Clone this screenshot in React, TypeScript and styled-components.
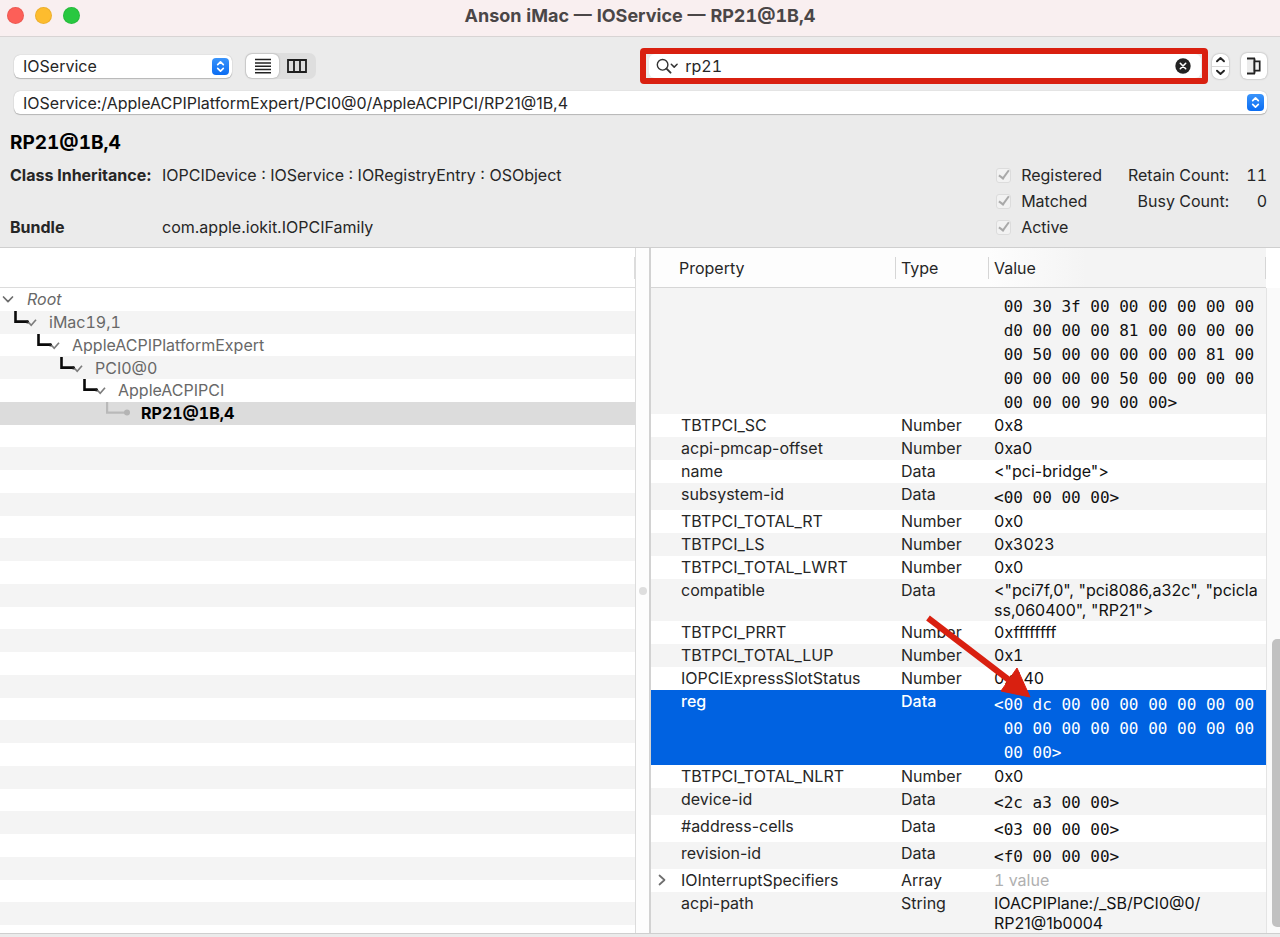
import React from "react";
import styled, { createGlobalStyle, css } from "styled-components";

const Global = createGlobalStyle`
  *, *::before, *::after { box-sizing: border-box; }
  body { margin: 0; background: #ebebeb; }
  button, input, select { font: inherit; color: inherit; }
`;

const tabular = css`
  font-variant-numeric: tabular-nums;
`;

const Window = styled.div`
  display: flex;
  flex-direction: column;
  height: 100vh;
  min-width: 960px;
  padding-bottom: 3px;
  background: #ebebeb;
  color: #262626;
  font: 400 16px/20px Inter, "Liberation Sans", sans-serif;
`;

const TitleBar = styled.header`
  display: grid;
  grid-template-columns: 1fr auto 1fr;
  align-items: center;
  height: 37px;
  padding: 0 7px 5px;
  background: #f9eff0;
  border-bottom: 1px solid #d8d4d4;
`;

const Title = styled.h1`
  ${tabular}
  margin: 0;
  font-size: 18px;
  font-weight: 700;
  line-height: 24px;
  color: #4a4647;
`;

const Lights = styled.div`
  display: flex;
  gap: 11px;
`;

const Light = styled.button<{ $color: string }>`
  width: 17px;
  height: 17px;
  padding: 0;
  border: 0;
  border-radius: 50%;
  background: ${(p) => p.$color};
  box-shadow: inset 0 0 0 1px rgba(0, 0, 0, 0.07);
`;

const Toolbar = styled.div`
  display: flex;
  align-items: center;
  padding: 11px 13px 7px 14px;
`;

const Spacer = styled.div`
  flex: 7;
`;

const PopUp = styled.div<{ $width?: string }>`
  display: grid;
  grid-template-columns: 1fr 20px;
  align-items: center;
  width: ${(p) => p.$width ?? "auto"};
  height: 23px;
  border-radius: 6px;
  background: #fff;
  box-shadow: 0 0 1px rgba(0, 0, 0, 0.3), 0 1px 1px rgba(0, 0, 0, 0.2);

  select {
    grid-area: 1 / 1 / 2 / 3;
    width: 100%;
    height: 23px;
    padding: 0 24px 0 9px;
    border: 0;
    background: transparent;
    appearance: none;
  }

  svg {
    grid-area: 1 / 2;
    pointer-events: none;
  }
`;

const PathRow = styled.div`
  padding: 0 13px 0 14px;
`;

const Segments = styled.div`
  display: flex;
  height: 26px;
  margin-left: 13px;
  padding: 1px;
  border-radius: 7px;
  background: #dedede;
`;

const Segment = styled.button<{ $on?: boolean }>`
  display: grid;
  place-items: center;
  width: ${(p) => (p.$on ? 33 : 36)}px;
  padding: 0;
  border: 0;
  border-radius: 6px;
  background: ${(p) => (p.$on ? "#fff" : "transparent")};
  box-shadow: ${(p) => (p.$on ? "0 0 2px rgba(0, 0, 0, 0.35)" : "none")};
`;

const Highlight = styled.div`
  flex: 12;
  height: 36px;
  border: 6px solid #d92010;
  border-radius: 4px;
  display: flex;
  background: #ebebeb;
`;

const SearchField = styled.label`
  display: flex;
  flex: 1;
  align-items: center;
  gap: 6px;
  margin: 0 1px 0 3px;
  padding: 0 10px 0 6px;
  border-radius: 6px;
  background: #fff;

  input {
    ${tabular}
    flex: 1;
    min-width: 0;
    height: 22px;
    padding: 0;
    border: 0;
    outline: 0;
    background: transparent;
  }
`;

const ClearButton = styled.button`
  display: grid;
  padding: 0;
  border: 0;
  background: none;
`;

const Stepper = styled.div`
  display: flex;
  flex-direction: column;
  width: 17px;
  margin-left: 4px;
  border-radius: 7px;
  background: #fff;
  box-shadow: 0 0 2px rgba(0, 0, 0, 0.35);

  button {
    display: grid;
    place-items: center;
    height: 12px;
    padding: 0;
    border: 0;
    background: none;
  }

  button + button {
    height: 13px;
    border-top: 1px solid #d9d9d9;
  }
`;

const InspectorButton = styled.button`
  display: grid;
  place-items: center;
  width: 26px;
  height: 26px;
  margin-left: 12px;
  padding: 0;
  border: 0;
  border-radius: 6px;
  background: #fff;
  box-shadow: 0 0 2px rgba(0, 0, 0, 0.35);
`;

const Info = styled.section`
  display: flex;
  align-items: flex-end;
  justify-content: space-between;
  padding: 17px 13px 7px 10px;
`;

const Name = styled.h2`
  ${tabular}
  margin: 0 0 7px;
  font-size: 19px;
  font-weight: 700;
  line-height: 24px;
  color: #000;
`;

const Facts = styled.dl`
  display: grid;
  grid-template-columns: 152px auto;
  grid-template-rows: repeat(3, 26px);
  align-items: center;
  margin: 0;

  dt { grid-column: 1; font-weight: 700; }
  dd { grid-column: 2; margin: 0; }
  dt:last-of-type, dd:last-of-type { grid-row: 3; }
`;

const Status = styled.div`
  display: grid;
  grid-template-columns: auto auto 38px;
  grid-template-rows: repeat(3, 26px);
  align-items: center;
  text-align: right;
  ${tabular}
`;

const Flag = styled.label`
  grid-column: 1;
  display: flex;
  align-items: center;
  gap: 10px;
  padding-right: 26px;

  input {
    display: grid;
    place-content: center;
    width: 15px;
    height: 15px;
    margin: 0;
    border: 1px solid #dcdcdc;
    border-radius: 3px;
    background: #f2f2f2;
    appearance: none;
  }

  input:checked::after {
    content: "";
    width: 6px;
    height: 11px;
    margin-bottom: 3px;
    border: solid #a9a9a9;
    border-width: 0 2px 2px 0;
    transform: rotate(36deg);
  }
`;

const Panes = styled.main`
  flex: 1;
  min-height: 0;
  display: grid;
  grid-template-columns: 635fr 16px 629fr;
  border-top: 1px solid #cfcfcf;
  border-bottom: 1px solid #cfcfcf;
  background: #fff;
`;

const TreePane = styled.section`
  display: flex;
  flex-direction: column;
  min-height: 0;
  min-width: 0;
`;

const TreeHead = styled.div`
  height: 40px;
  padding: 9px 0;
  border-bottom: 1px solid #dcdcdc;

  &::after {
    content: "";
    display: block;
    height: 22px;
    border-right: 1px solid #dcdcdc;
  }
`;

const Tree = styled.ul`
  flex: 1;
  min-height: 0;
  display: grid;
  grid-template-rows: repeat(28, minmax(0, 1fr)) 8px;
  margin: 0;
  padding: 0;
  list-style: none;
  ${tabular}
`;

const TreeRow = styled.li<{ $level: number; $selected?: boolean }>`
  display: flex;
  align-items: center;
  gap: 11px;
  padding-left: ${(p) => (p.$level === 0 ? 2 : 23 * p.$level - 9)}px;
  color: #686868;
  font-style: ${(p) => (p.$level === 0 ? "italic" : "normal")};

  &:nth-child(even) { background: #f4f4f4; }

  ${(p) =>
    p.$selected &&
    css`
      && { background: #dcdcdc; }
      color: #000;
      font-weight: 700;
    `}

  svg { flex: none; }
`;

const Divider = styled.div`
  display: grid;
  place-items: center;
  border-left: 1px solid #dcdcdc;
  border-right: 2px solid #d2d2d2;
  background: #fdfdfd;

  &::after {
    content: "";
    width: 8px;
    height: 8px;
    border-radius: 50%;
    background: #dedede;
  }
`;

const PropertyPane = styled.section`
  display: grid;
  grid-template-columns: 1fr 14px;
  min-height: 0;
  min-width: 0;
`;

const TableClip = styled.div`
  min-height: 0;
  overflow: hidden;
`;

const Table = styled.table`
  width: 100%;
  table-layout: fixed;
  border-collapse: separate;
  border-spacing: 0;

  th {
    height: 40px;
    padding: 9px 0 8px;
    border-bottom: 1px solid #d6d6d6;
    font-weight: 400;
    text-align: left;
    background: #fdfdfd;
  }

  th:last-child { background: linear-gradient(90deg, #fdfdfd, #f4f4f4 35%); }

  td {
    height: 23px;
    padding: 1px 0 1px 5px;
    vertical-align: top;
  }

  td:first-child { padding-left: 0; }
`;

const HeadLabel = styled.div<{ $inset: number }>`
  height: 22px;
  padding-left: ${(p) => p.$inset}px;
  border-right: 1px solid #d6d6d6;
  line-height: 22px;
`;

const Row = styled.tr<{ $selected?: boolean }>`
  color: ${(p) => (p.$selected ? "#fff" : "#262626")};
  background: ${(p) => (p.$selected ? "#0062e1" : "#fff")};
  font-weight: ${(p) => (p.$selected ? 500 : 400)};

  &:nth-child(odd) {
    background: ${(p) => (p.$selected ? "#0062e1" : "#f4f4f4")};
  }

  td:last-child { color: ${(p) => (p.$selected ? "#fff" : "#111")}; }
`;

const PropertyName = styled.div`
  display: grid;
  grid-template-columns: 30px 1fr;
  align-items: center;
  svg { margin-left: 7px; }
`;

const Hex = styled.div`
  position: relative;
  padding-top: 2px;
  font: 400 16px/24px "DejaVu Sans Mono", monospace;
  white-space: pre;
  margin-bottom: -1px;
`;

const ScrolledHex = styled(Hex)`
  padding-top: 6px;
  margin-bottom: -2px;
`;

const Lines = styled.span<{ $tabular?: boolean }>`
  white-space: pre;
  ${(p) => p.$tabular && tabular}
`;

const Muted = styled.span`
  ${tabular}
  color: #b0b0b0;
`;

const Arrow = styled.svg`
  position: absolute;
  left: -69px;
  top: -77px;
  width: 106px;
  height: 84px;
  pointer-events: none;
`;

const ScrollTrack = styled.div`
  display: flex;
  flex-direction: column;
  justify-content: flex-end;
  margin-top: 40px;
  padding: 0 0 6px 5px;
  border-left: 1px solid #e4e4e4;
  background: #fafafa;
`;

const ScrollThumb = styled.div`
  height: 45%;
  border-radius: 5px 0 0 5px;
  background: #c1c1c1;
`;

const UpDown = () => (
  <svg width="17" height="17" viewBox="0 0 17 17" aria-hidden="true">
    <defs>
      <linearGradient id="blue" x2="0" y2="1">
        <stop stopColor="#3a94fb" />
        <stop offset="1" stopColor="#0a6cf2" />
      </linearGradient>
    </defs>
    <rect width="17" height="17" rx="4" fill="url(#blue)" />
    <path d="M5.7 6.6 8.5 3.9l2.8 2.7M5.7 10.4l2.8 2.7 2.8-2.7" fill="none" stroke="#fff" strokeWidth="1.7" strokeLinecap="round" strokeLinejoin="round" />
  </svg>
);

const Chevron = ({ d, w, h, stroke = "#222", width = 1.9 }: { d: string; w: number; h: number; stroke?: string; width?: number }) => (
  <svg width={w} height={h} viewBox={`0 0 ${w} ${h}`} aria-hidden="true">
    <path d={d} fill="none" stroke={stroke} strokeWidth={width} strokeLinecap="round" strokeLinejoin="round" />
  </svg>
);

const Branch = () => (
  <svg width="24" height="22" viewBox="0 0 24 22" aria-hidden="true">
    <path d="M1.5 0v10.6H14" fill="none" stroke="#0a0a0a" strokeWidth="2.6" />
    <path d="M12.5 9.6h2.5v2.8h-2.5z" fill="#222" />
    <path d="M14.5 11.2l2.7 3 4.8-5.4" fill="none" stroke="#7c7c7c" strokeWidth="1.7" />
  </svg>
);

const Leaf = () => (
  <svg width="24" height="22" viewBox="0 0 24 22" aria-hidden="true">
    <path d="M1 0v10.6h19" fill="none" stroke="#b9b9b9" strokeWidth="2.4" />
    <circle cx="21" cy="10.6" r="3" fill="#b4b4b4" />
  </svg>
);

const nodes = ["Root", "iMac19,1", "AppleACPIPlatformExpert", "PCI0@0", "AppleACPIPCI", "RP21@1B,4"];

type Property = { name: string; type: string; value?: string; hex?: string; selected?: boolean; count?: string };

const properties: Property[] = [
  { name: "TBTPCI_SC", type: "Number", value: "0x8" },
  { name: "acpi-pmcap-offset", type: "Number", value: "0xa0" },
  { name: "name", type: "Data", value: '<"pci-bridge">' },
  { name: "subsystem-id", type: "Data", hex: "<00 00 00 00>" },
  { name: "TBTPCI_TOTAL_RT", type: "Number", value: "0x0" },
  { name: "TBTPCI_LS", type: "Number", value: "0x3023" },
  { name: "TBTPCI_TOTAL_LWRT", type: "Number", value: "0x0" },
  { name: "compatible", type: "Data", value: '<"pci7f,0", "pci8086,a32c", "pcicla\nss,060400", "RP21">' },
  { name: "TBTPCI_PRRT", type: "Number", value: "0xffffffff" },
  { name: "TBTPCI_TOTAL_LUP", type: "Number", value: "0x1" },
  { name: "IOPCIExpressSlotStatus", type: "Number", value: "0x140" },
  {
    name: "reg",
    type: "Data",
    hex: "<00 dc 00 00 00 00 00 00 00\n 00 00 00 00 00 00 00 00 00\n 00 00>",
    selected: true,
  },
  { name: "TBTPCI_TOTAL_NLRT", type: "Number", value: "0x0" },
  { name: "device-id", type: "Data", hex: "<2c a3 00 00>" },
  { name: "#address-cells", type: "Data", hex: "<03 00 00 00>" },
  { name: "revision-id", type: "Data", hex: "<f0 00 00 00>" },
  { name: "IOInterruptSpecifiers", type: "Array", count: "1 value" },
  { name: "acpi-path", type: "String", value: "IOACPIPlane:/_SB/PCI0@0/\nRP21@1b0004" },
];

const scrolledLines = [
  " 00 30 3f 00 00 00 00 00 00",
  " d0 00 00 00 81 00 00 00 00",
  " 00 50 00 00 00 00 00 81 00",
  " 00 00 00 00 50 00 00 00 00",
  " 00 00 00 90 00 00>",
].join("\n");

export default function App() {
  return (
    <Window>
      <Global />
      <TitleBar>
        <Lights>
          <Light $color="#fd5f58" aria-label="Close" />
          <Light $color="#fdbc2e" aria-label="Minimize" />
          <Light $color="#28c840" aria-label="Zoom" />
        </Lights>
        <Title>Anson iMac — IOService — RP21@1B,4</Title>
      </TitleBar>

      <Toolbar>
        <PopUp $width="218px">
          <select aria-label="Plane" defaultValue="IOService">
            <option>IOService</option>
          </select>
          <UpDown />
        </PopUp>
        <Segments>
          <Segment $on aria-label="List view">
            <svg width="18" height="16" viewBox="0 0 18 16" aria-hidden="true">
              <path d="M1 1.5h16M1 5h16M1 8.2h16M1 11.5h16M1 14.7h16" stroke="#222" strokeWidth="1.5" />
            </svg>
          </Segment>
          <Segment aria-label="Column view">
            <svg width="20" height="14" viewBox="0 0 20 14" aria-hidden="true">
              <path d="M1 1h18v12H1zM7 1v12M13 1v12" fill="none" stroke="#1d1d1d" strokeWidth="1.8" />
            </svg>
          </Segment>
        </Segments>
        <Spacer />
        <Highlight>
          <SearchField>
            <svg width="24" height="16" viewBox="0 0 24 16" aria-hidden="true">
              <circle cx="7.6" cy="6.8" r="5.3" fill="none" stroke="#333" strokeWidth="1.4" />
              <path d="M11.5 10.7l4 4" stroke="#333" strokeWidth="1.9" strokeLinecap="round" />
              <path d="M16.3 6.3l2.9 2.8 2.9-2.8" fill="none" stroke="#333" strokeWidth="1.5" strokeLinecap="round" strokeLinejoin="round" />
            </svg>
            <input type="text" aria-label="Search" defaultValue="rp21" />
            <ClearButton aria-label="Clear search">
              <svg width="16" height="16" viewBox="0 0 16 16" aria-hidden="true">
                <circle cx="8" cy="8" r="7.7" fill="#222" />
                <path d="M5.3 5.3l5.4 5.4M10.7 5.3l-5.4 5.4" stroke="#fff" strokeWidth="1.6" strokeLinecap="round" />
              </svg>
            </ClearButton>
          </SearchField>
        </Highlight>
        <Stepper>
          <button aria-label="Previous match">
            <Chevron w={11} h={7} d="M2 5.3 5.5 2 9 5.3" />
          </button>
          <button aria-label="Next match">
            <Chevron w={11} h={7} d="M2 1.7 5.5 5 9 1.7" />
          </button>
        </Stepper>
        <InspectorButton aria-label="Toggle inspector">
          <svg width="16" height="18" viewBox="0 0 16 18" aria-hidden="true">
            <path d="M1 2.5h7v13H1z" fill="#ececec" />
            <path d="M1 1.5h8M1 16.5h8M8.5 1.5v15" fill="none" stroke="#222" strokeWidth="1.9" />
            <path d="M8.5 4.3h5.2v9.4H8.5z" fill="#f2f2f2" stroke="#222" strokeWidth="1.7" />
          </svg>
        </InspectorButton>
      </Toolbar>

      <PathRow>
        <PopUp>
          <select aria-label="Registry path">
            <option>IOService:/AppleACPIPlatformExpert/PCI0@0/AppleACPIPCI/RP21@1B,4</option>
          </select>
          <UpDown />
        </PopUp>
      </PathRow>

      <Info>
        <div>
          <Name>RP21@1B,4</Name>
          <Facts>
            <dt>Class Inheritance:</dt>
            <dd>IOPCIDevice : IOService : IORegistryEntry : OSObject</dd>
            <dt>Bundle</dt>
            <dd>com.apple.iokit.IOPCIFamily</dd>
          </Facts>
        </div>
        <Status>
          <Flag>
            <input type="checkbox" defaultChecked disabled />
            Registered
          </Flag>
          <span>Retain Count:</span>
          <span>11</span>
          <Flag>
            <input type="checkbox" defaultChecked disabled />
            Matched
          </Flag>
          <span>Busy Count:</span>
          <span>0</span>
          <Flag>
            <input type="checkbox" defaultChecked disabled />
            Active
          </Flag>
        </Status>
      </Info>

      <Panes>
        <TreePane>
          <TreeHead />
          <Tree>
            {Array.from({ length: 29 }, (_, i) => (
              <TreeRow key={i} $level={i < nodes.length ? i : 0} $selected={i === 5}>
                {i === 0 && <Chevron w={14} h={9} d="M1.5 2 6 6.7 10.5 2" stroke="#6e6e6e" width={1.7} />}
                {i > 0 && i < 5 && <Branch />}
                {i === 5 && <Leaf />}
                {nodes[i]}
              </TreeRow>
            ))}
          </Tree>
        </TreePane>
        <Divider />
        <PropertyPane>
          <TableClip>
            <Table>
              <colgroup>
                <col style={{ width: 245 }} />
                <col style={{ width: 93 }} />
                <col />
              </colgroup>
              <thead>
                <tr>
                  <th><HeadLabel $inset={28}>Property</HeadLabel></th>
                  <th><HeadLabel $inset={5}>Type</HeadLabel></th>
                  <th><HeadLabel $inset={5}>Value</HeadLabel></th>
                </tr>
              </thead>
              <tbody>
                <Row>
                  <td />
                  <td />
                  <td><ScrolledHex>{scrolledLines}</ScrolledHex></td>
                </Row>
                {properties.map((p) => (
                  <Row key={p.name} $selected={p.selected}>
                    <td>
                      <PropertyName>
                        <span>{p.count && <Chevron w={9} h={12} d="M1.5 1.5 6.5 6l-5 4.5" stroke="#6e6e6e" width={1.7} />}</span>
                        {p.name}
                      </PropertyName>
                    </td>
                    <td>{p.type}</td>
                    <td>
                      {p.value && <Lines $tabular={p.type === "Number"}>{p.value}</Lines>}
                      {p.count && <Muted>{p.count}</Muted>}
                      {p.hex && (
                        <Hex>
                          {p.hex}
                          {p.selected && (
                            <Arrow viewBox="0 0 106 84" aria-hidden="true">
                              <path d="M3 4 84 66" stroke="#d92010" strokeWidth="6" />
                              <path d="M105 83 92 54 76 77z" fill="#d92010" stroke="#d92010" />
                            </Arrow>
                          )}
                        </Hex>
                      )}
                    </td>
                  </Row>
                ))}
              </tbody>
            </Table>
          </TableClip>
          <ScrollTrack>
            <ScrollThumb />
          </ScrollTrack>
        </PropertyPane>
      </Panes>
    </Window>
  );
}
